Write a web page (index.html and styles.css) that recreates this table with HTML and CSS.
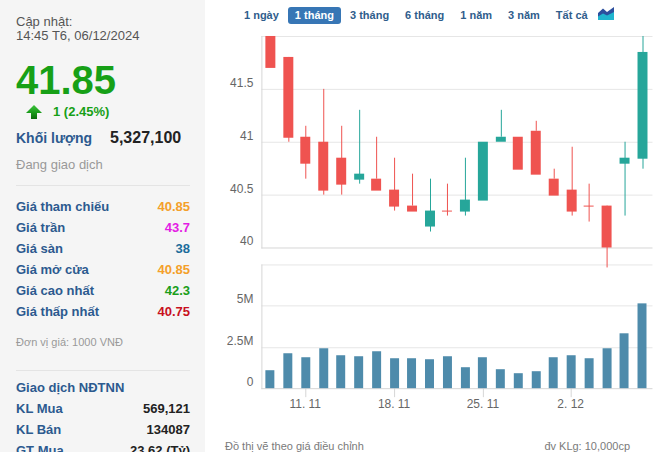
FILE: index.html
```html
<!DOCTYPE html>
<html lang="vi">
<head>
<meta charset="utf-8">
<title>41.85</title>
<link rel="stylesheet" href="styles.css">
</head>
<body>
<div class="wrap">
  <aside class="info">
    <div class="upd">Cập nhật:<br>14:45 T6, 06/12/2024</div>
    <div class="price">41.85</div>
    <div class="change">
      <svg class="arrow" width="16" height="14" viewBox="0 0 16 14">
        <defs>
          <linearGradient id="ag" x1="0" y1="0" x2="0" y2="1">
            <stop offset="0" stop-color="#3cc43c"/>
            <stop offset="0.55" stop-color="#1a9a1a"/>
            <stop offset="1" stop-color="#0a6a0a"/>
          </linearGradient>
        </defs>
        <polygon points="8,0 16,8 11,8 11,14 5,14 5,8 0,8" fill="url(#ag)"/>
      </svg>
      <span>1 (2.45%)</span>
    </div>
    <div class="vol"><span class="lbl">Khối lượng</span><span class="num">5,327,100</span></div>
    <div class="status">Đang giao dịch</div>
    <div class="sep"></div>
    <div class="rows">
      <div class="row"><span class="lbl">Giá tham chiếu</span><span class="v ref">40.85</span></div>
      <div class="row"><span class="lbl">Giá trần</span><span class="v ceil">43.7</span></div>
      <div class="row"><span class="lbl">Giá sàn</span><span class="v floor">38</span></div>
      <div class="row"><span class="lbl">Giá mở cửa</span><span class="v ref">40.85</span></div>
      <div class="row"><span class="lbl">Giá cao nhất</span><span class="v up">42.3</span></div>
      <div class="row"><span class="lbl">Giá thấp nhất</span><span class="v down">40.75</span></div>
    </div>
    <div class="unit">Đơn vị giá: 1000 VNĐ</div>
    <div class="sep sep2"></div>
    <div class="rows foreign">
      <div class="row"><span class="lbl">Giao dịch NĐTNN</span></div>
      <div class="row"><span class="lbl">KL Mua</span><span class="v">569,121</span></div>
      <div class="row"><span class="lbl">KL Bán</span><span class="v">134087</span></div>
      <div class="row"><span class="lbl">GT Mua</span><span class="v">23.62 (Tỷ)</span></div>
    </div>
  </aside>

  <main class="chart">
    <nav class="tabs">
      <span class="tab">1 ngày</span>
      <span class="tab active">1 tháng</span>
      <span class="tab">3 tháng</span>
      <span class="tab">6 tháng</span>
      <span class="tab">1 năm</span>
      <span class="tab">3 năm</span>
      <span class="tab">Tất cả</span>
      <svg class="ico" width="17" height="13" viewBox="0 0 17 13">
        <path d="M0 13V6L5 1.5L9 5L16 0V13Z" fill="#2c4f9e"/>
        <path d="M0 13V9.5L5 6.5L9 8.5L16 5V13Z" fill="#20b5cf"/>
      </svg>
    </nav>

    <svg class="plot" width="448" height="411" viewBox="205 30 448 411">
      <g class="grid">
        <rect x="261" y="36" width="392" height="1"/>
        <rect x="261" y="89" width="392" height="1"/>
        <rect x="261" y="142" width="392" height="1"/>
        <rect x="261" y="195" width="392" height="1"/>
        <rect x="261" y="265" width="392" height="1"/>
        <rect x="261" y="306" width="392" height="1"/>
        <rect x="261" y="348" width="392" height="1"/>
      </g>
      <g class="axis">
        <rect x="261" y="36" width="1" height="213"/>
        <rect x="261" y="248" width="392" height="1"/>
        <rect x="261" y="265" width="1" height="125"/>
        <rect x="261" y="389" width="392" height="1"/>
        <rect x="305" y="389" width="1" height="9"/>
        <rect x="394" y="389" width="1" height="9"/>
        <rect x="483" y="389" width="1" height="9"/>
        <rect x="571" y="389" width="1" height="9"/>
      </g>
      <g class="ylab">
        <text x="253" y="87">41.5</text>
        <text x="253" y="140">41</text>
        <text x="253" y="193">40.5</text>
        <text x="253" y="246">40</text>
        <text x="253" y="304">5M</text>
        <text x="253" y="346">2.5M</text>
        <text x="253" y="387">0</text>
      </g>
      <g class="xlab">
        <text x="305" y="409">11. 11</text>
        <text x="394" y="409">18. 11</text>
        <text x="483" y="409">25. 11</text>
        <text x="571" y="409">2. 12</text>
      </g>
      <g class="vbars">
        <rect x="265" y="371" width="9" height="18"/>
        <rect x="283" y="354" width="9" height="35"/>
        <rect x="301" y="358" width="9" height="31"/>
        <rect x="319" y="349" width="9" height="40"/>
        <rect x="336" y="356" width="9" height="33"/>
        <rect x="354" y="357" width="9" height="32"/>
        <rect x="372" y="352" width="9" height="37"/>
        <rect x="390" y="359" width="9" height="30"/>
        <rect x="407" y="359" width="9" height="30"/>
        <rect x="425" y="360" width="9" height="29"/>
        <rect x="443" y="357" width="9" height="32"/>
        <rect x="461" y="368" width="9" height="21"/>
        <rect x="478" y="358" width="9" height="31"/>
        <rect x="496" y="370" width="9" height="19"/>
        <rect x="514" y="374" width="9" height="15"/>
        <rect x="532" y="372" width="9" height="17"/>
        <rect x="549" y="358" width="9" height="31"/>
        <rect x="567" y="356" width="9" height="33"/>
        <rect x="585" y="359" width="9" height="30"/>
        <rect x="603" y="349" width="9" height="40"/>
        <rect x="620" y="334" width="9" height="55"/>
        <rect x="638" y="304" width="9" height="85"/>
      </g>
      <g class="red">
        <rect x="265" y="36" width="10" height="32"/>
        <rect x="288" y="57" width="1" height="85"/>
        <rect x="283" y="57" width="10" height="81"/>
        <rect x="305" y="126" width="1" height="53"/>
        <rect x="300" y="137" width="10" height="27"/>
        <rect x="323" y="89" width="1" height="106"/>
        <rect x="318" y="142" width="10" height="49"/>
        <rect x="341" y="126" width="1" height="69"/>
        <rect x="336" y="158" width="10" height="27"/>
        <rect x="376" y="137" width="1" height="42"/>
        <rect x="371" y="179" width="10" height="12"/>
        <rect x="394" y="158" width="1" height="53"/>
        <rect x="389" y="190" width="10" height="17"/>
        <rect x="412" y="174" width="1" height="32"/>
        <rect x="407" y="206" width="10" height="6"/>
        <rect x="447" y="184" width="1" height="32"/>
        <rect x="442" y="211" width="10" height="1"/>
        <rect x="513" y="137" width="10" height="33"/>
        <rect x="536" y="121" width="1" height="10"/>
        <rect x="531" y="131" width="10" height="44"/>
        <rect x="554" y="169" width="1" height="10"/>
        <rect x="549" y="179" width="10" height="17"/>
        <rect x="572" y="147" width="1" height="69"/>
        <rect x="567" y="190" width="10" height="22"/>
        <rect x="589" y="184" width="1" height="38"/>
        <rect x="584" y="206" width="10" height="1"/>
        <rect x="607" y="206" width="1" height="62"/>
        <rect x="602" y="206" width="10" height="42"/>
      </g>
      <g class="green">
        <rect x="359" y="110" width="1" height="74"/>
        <rect x="354" y="174" width="10" height="6"/>
        <rect x="430" y="179" width="1" height="53"/>
        <rect x="425" y="211" width="10" height="16"/>
        <rect x="465" y="158" width="1" height="58"/>
        <rect x="460" y="200" width="10" height="12"/>
        <rect x="478" y="142" width="10" height="59"/>
        <rect x="501" y="110" width="1" height="27"/>
        <rect x="496" y="137" width="10" height="5"/>
        <rect x="625" y="142" width="1" height="74"/>
        <rect x="620" y="158" width="10" height="6"/>
        <rect x="643" y="36" width="1" height="133"/>
        <rect x="638" y="52" width="10" height="107"/>
      </g>
    </svg>

    <div class="foot">
      <span>Đồ thị vẽ theo giá điều chỉnh</span>
      <span>đv KLg: 10,000cp</span>
    </div>
  </main>
</div>
</body>
</html>
```

FILE: styles.css
```css
* { box-sizing: border-box; }
html, body {
  margin: 0;
  padding: 0;
  background: #fff;
  font-family: "Liberation Sans", Arial, sans-serif;
  overflow: hidden;
}
.wrap {
  display: flex;
  width: 653px;
  height: 452px;
  overflow: hidden;
}

/* left info panel */
.info {
  width: 205px;
  flex: none;
  background: #f5f5f5;
  padding: 15px 15px 0 16px;
  height: 452px;
  overflow: hidden;
}
.upd {
  font-size: 13px;
  line-height: 14px;
  color: #555;
}
.price {
  margin-top: 17px;
  font-size: 40px;
  line-height: 40px;
  font-weight: bold;
  color: #17a017;
}
.change {
  margin-top: 4px;
  height: 16px;
  padding-left: 10px;
  display: flex;
  align-items: center;
  gap: 11px;
  font-size: 13px;
  line-height: 16px;
  font-weight: bold;
  color: #17a017;
}
.arrow { display: block; }
.vol {
  margin-top: 8px;
  display: flex;
  align-items: baseline;
  line-height: 20px;
}
.vol .lbl {
  width: 94px;
  font-size: 14px;
  font-weight: bold;
  color: #2c5a8f;
}
.vol .num {
  font-size: 16px;
  font-weight: bold;
  color: #222;
}
.status {
  margin-top: 9px;
  font-size: 13px;
  line-height: 16px;
  color: #999;
}
.sep {
  margin-top: 12px;
  border-top: 1px solid #e4e4e4;
}
.sep2 { margin-top: 21px; }
.rows { margin-top: 10px; }
.rows.foreign { margin-top: 6px; }
.row {
  display: flex;
  justify-content: space-between;
  font-size: 13px;
  line-height: 21px;
  font-weight: bold;
}
.row .lbl { color: #2c5a8f; }
.row .v { color: #222; }
.row .ref { color: #f4a02a; }
.row .ceil { color: #e41de4; }
.row .floor { color: #1b6c9b; }
.row .up { color: #1a9e1a; }
.row .down { color: #c8101e; }
.unit {
  margin-top: 13px;
  font-size: 11px;
  line-height: 14px;
  color: #999;
}

/* chart side */
.chart {
  flex: 1;
  display: flex;
  flex-direction: column;
}
.tabs {
  height: 30px;
  padding: 7px 0 0 32px;
  display: flex;
  align-items: flex-start;
  gap: 2px;
}
.tab {
  display: block;
  height: 17px;
  padding: 0 7px;
  font-size: 11px;
  line-height: 17px;
  font-weight: bold;
  color: #2f5d8c;
  border-radius: 3px;
  white-space: nowrap;
}
.tab.active {
  background: #3776b5;
  color: #fff;
}
.ico {
  display: block;
  margin-left: 1px;
}
.plot { display: block; }
.grid rect { fill: #e6e6e6; }
.axis rect { fill: #d6d6d6; }
.ylab text {
  font-family: "Liberation Sans", Arial, sans-serif;
  font-size: 12px;
  fill: #666;
  text-anchor: end;
}
.xlab text {
  font-family: "Liberation Sans", Arial, sans-serif;
  font-size: 12px;
  fill: #666;
  text-anchor: middle;
}
.vbars rect { fill: #4e8bab; }
.red rect { fill: #ef5350; }
.green rect { fill: #26a69a; }
.foot {
  display: flex;
  justify-content: space-between;
  padding: 0 23px 0 20px;
  font-size: 11px;
  line-height: 12px;
  color: #7a7a7a;
}
```
